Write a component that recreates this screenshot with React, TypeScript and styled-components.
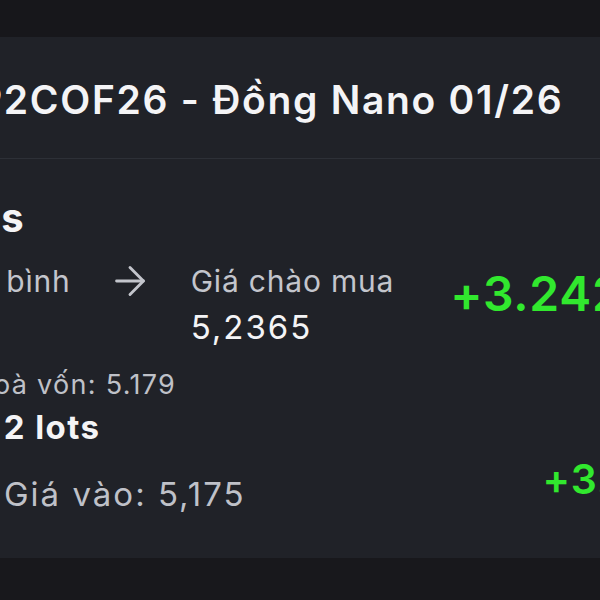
import { ArrowRight } from "lucide-react";
import styled, { createGlobalStyle } from "styled-components";

const GlobalStyle = createGlobalStyle`
  html, body {
    margin: 0;
    padding: 0;
    background: #17171b;
    overflow: hidden;
  }
  body {
    font-family: Inter, "Noto Sans", "Liberation Sans", sans-serif;
  }
`;

const Screen = styled.div`
  width: 600px;
  height: 600px;
  display: flex;
  flex-direction: column;
  overflow: hidden;
`;

const TopBar = styled.div`
  height: 37px;
  flex-shrink: 0;
  background: #17171b;
`;

const Panel = styled.div`
  height: 521px;
  flex-shrink: 0;
  background: #202228;
  display: flex;
  flex-direction: column;
  overflow: hidden;
`;

const Header = styled.div`
  box-sizing: border-box;
  height: 122px;
  padding-top: 40px;
  border-bottom: 1px solid #2d3037;
`;

const Title = styled.div<{ $shift: number }>`
  margin-left: ${(p) => p.$shift}px;
  font-size: 39px;
  line-height: 46px;
  font-weight: 600;
  letter-spacing: 1.7px;
  color: #f4f4f6;
  white-space: nowrap;
`;

const Body = styled.div`
  padding-top: 35px;
  display: flex;
  flex-direction: column;
`;

const SectionTitle = styled.div<{ $shift: number }>`
  margin-left: ${(p) => p.$shift}px;
  font-size: 40px;
  line-height: 48px;
  font-weight: 700;
  color: #f4f4f6;
  white-space: nowrap;
`;

const PriceRow = styled.div`
  margin-top: 21px;
  display: flex;
  align-items: flex-start;
  white-space: nowrap;
`;

const PriceCol = styled.div<{ $shift?: number }>`
  margin-left: ${(p) => p.$shift ?? 0}px;
  display: flex;
  flex-direction: column;
  gap: 8px;
`;

const Label = styled.div`
  font-size: 30px;
  line-height: 36px;
  font-weight: 400;
  letter-spacing: 0.8px;
  color: #c3c5cc;
`;

const Value = styled.div`
  font-size: 33px;
  line-height: 40px;
  font-weight: 400;
  letter-spacing: 2px;
  color: #f4f4f6;
`;

const Arrow = styled.div`
  margin: 0 38px 0 36px;
  height: 36px;
  display: flex;
  align-items: center;
  color: #c3c5cc;
`;

const Profit = styled.div<{ $size: number; $gap: number; $top: number }>`
  margin-left: ${(p) => p.$gap}px;
  margin-top: ${(p) => p.$top}px;
  font-size: ${(p) => p.$size}px;
  line-height: 1.2;
  font-weight: 600;
  letter-spacing: 0.8px;
  color: #31e82e;
  white-space: nowrap;
`;

const Note = styled.div<{ $shift: number }>`
  margin-top: 21px;
  margin-left: ${(p) => p.$shift}px;
  font-size: 27px;
  line-height: 34px;
  font-weight: 400;
  letter-spacing: 1.3px;
  color: #bfc1c8;
  white-space: nowrap;
`;

const Lots = styled.div<{ $shift: number }>`
  margin-top: 8px;
  margin-left: ${(p) => p.$shift}px;
  font-size: 33px;
  line-height: 34px;
  font-weight: 700;
  letter-spacing: 1.4px;
  color: #f4f4f6;
  white-space: nowrap;
`;

const EntryRow = styled.div`
  margin-top: 31px;
  display: flex;
  align-items: flex-start;
  white-space: nowrap;
`;

const Entry = styled.div`
  margin-left: 4px;
  font-size: 33px;
  line-height: 38px;
  font-weight: 400;
  letter-spacing: 2px;
  color: #bfc1c8;
`;

const BottomBar = styled.div`
  flex: 1;
  background: #18181c;
`;

export default function App() {
  return (
    <>
      <GlobalStyle />
      <Screen>
        <TopBar />
        <Panel>
          <Header>
            <Title $shift={-23}>P2COF26 - Đồng Nano 01/26</Title>
          </Header>
          <Body>
            <SectionTitle $shift={-157}>Positions</SectionTitle>
            <PriceRow>
              <PriceCol $shift={-140}>
                <Label>Giá trung bình</Label>
                <Value>5,179</Value>
              </PriceCol>
              <Arrow>
                <ArrowRight size={46} strokeWidth={1.5} />
              </Arrow>
              <PriceCol>
                <Label>Giá chào mua</Label>
                <Value>5,2365</Value>
              </PriceCol>
              <Profit $size={48} $gap={56} $top={2}>+3.242.500 đ</Profit>
            </PriceRow>
            <Note $shift={-78}>Giá hoà vốn: 5.179</Note>
            <Lots $shift={-80}>Mua 2 lots</Lots>
            <EntryRow>
              <Entry>Giá vào: 5,175</Entry>
              <Profit $size={41} $gap={297} $top={-20}>+3.242.500 đ</Profit>
            </EntryRow>
          </Body>
        </Panel>
        <BottomBar />
      </Screen>
    </>
  );
}
